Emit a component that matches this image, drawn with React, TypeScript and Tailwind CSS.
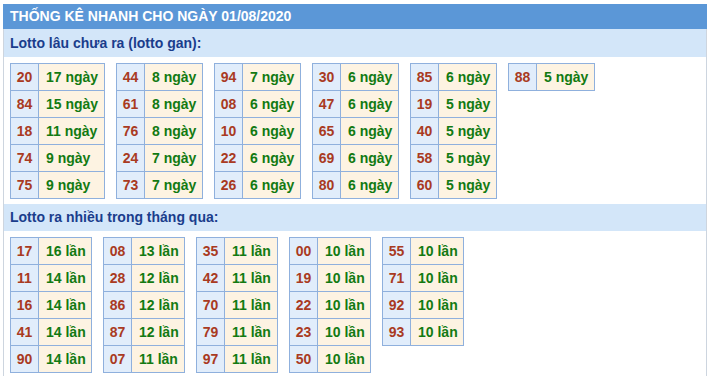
const ganTables: [string, string][][] = [
  [["20", "17 ngày"], ["84", "15 ngày"], ["18", "11 ngày"], ["74", "9 ngày"], ["75", "9 ngày"]],
  [["44", "8 ngày"], ["61", "8 ngày"], ["76", "8 ngày"], ["24", "7 ngày"], ["73", "7 ngày"]],
  [["94", "7 ngày"], ["08", "6 ngày"], ["10", "6 ngày"], ["22", "6 ngày"], ["26", "6 ngày"]],
  [["30", "6 ngày"], ["47", "6 ngày"], ["65", "6 ngày"], ["69", "6 ngày"], ["80", "6 ngày"]],
  [["85", "6 ngày"], ["19", "5 ngày"], ["40", "5 ngày"], ["58", "5 ngày"], ["60", "5 ngày"]],
  [["88", "5 ngày"]],
];

const hotTables: [string, string][][] = [
  [["17", "16 lần"], ["11", "14 lần"], ["16", "14 lần"], ["41", "14 lần"], ["90", "14 lần"]],
  [["08", "13 lần"], ["28", "12 lần"], ["86", "12 lần"], ["87", "12 lần"], ["07", "11 lần"]],
  [["35", "11 lần"], ["42", "11 lần"], ["70", "11 lần"], ["79", "11 lần"], ["97", "11 lần"]],
  [["00", "10 lần"], ["19", "10 lần"], ["22", "10 lần"], ["23", "10 lần"], ["50", "10 lần"]],
  [["55", "10 lần"], ["71", "10 lần"], ["92", "10 lần"], ["93", "10 lần"]],
];

function NumTable({ rows, wide }: { rows: [string, string][]; wide: string }) {
  return (
    <div className="flex flex-col self-start border-t border-l border-[#8fb0dd]">
      {rows.map(([num, count]) => (
        <div key={num} className="flex h-[27px]">
          <div className="w-[28px] flex items-center justify-center border-r border-b border-[#8fb0dd] bg-[#e1edfb] text-[#a93a22]">
            {num}
          </div>
          <div
            className={`${wide} flex items-center pl-[7px] border-r border-b border-[#8fb0dd] bg-[#fdf3e2] text-[#127a12]`}
          >
            {count}
          </div>
        </div>
      ))}
    </div>
  );
}

function SectionTitle({ children, tall }: { children: React.ReactNode; tall: string }) {
  return (
    <div className={`${tall} bg-[#d3e6f9] flex items-center px-[6px] text-[#1a3d8c] text-[14px] font-bold`}>
      {children}
    </div>
  );
}

export default function App() {
  return (
    <div
      className="w-[708px] h-[376px] bg-white pt-[4px] pl-[3px] overflow-hidden"
      style={{ fontFamily: '"Liberation Sans", Arial, sans-serif' }}
    >
      <div className="w-[704px]">
        <div className="bg-[#5b97d7] h-[25px] flex items-center px-[7px] text-white text-[14px] font-bold">
          THỐNG KÊ NHANH CHO NGÀY 01/08/2020
        </div>
        <div className="border-x border-[#cdd5df] text-[14px] font-bold">
          <SectionTitle tall="h-[28px]">Lotto lâu chưa ra (lotto gan):</SectionTitle>
          <div className="flex gap-[11px] px-[6px] pt-[6px] pb-[5px]">
            {ganTables.map((t, i) => (
              <NumTable key={i} rows={t} wide={i === 0 ? "w-[66px]" : "w-[58px]"} />
            ))}
          </div>
          <SectionTitle tall="h-[27px]">Lotto ra nhiều trong tháng qua:</SectionTitle>
          <div className="flex gap-[11px] px-[6px] pt-[6px] pb-[4px]">
            {hotTables.map((t, i) => (
              <NumTable key={i} rows={t} wide="w-[53px]" />
            ))}
          </div>
        </div>
      </div>
    </div>
  );
}
